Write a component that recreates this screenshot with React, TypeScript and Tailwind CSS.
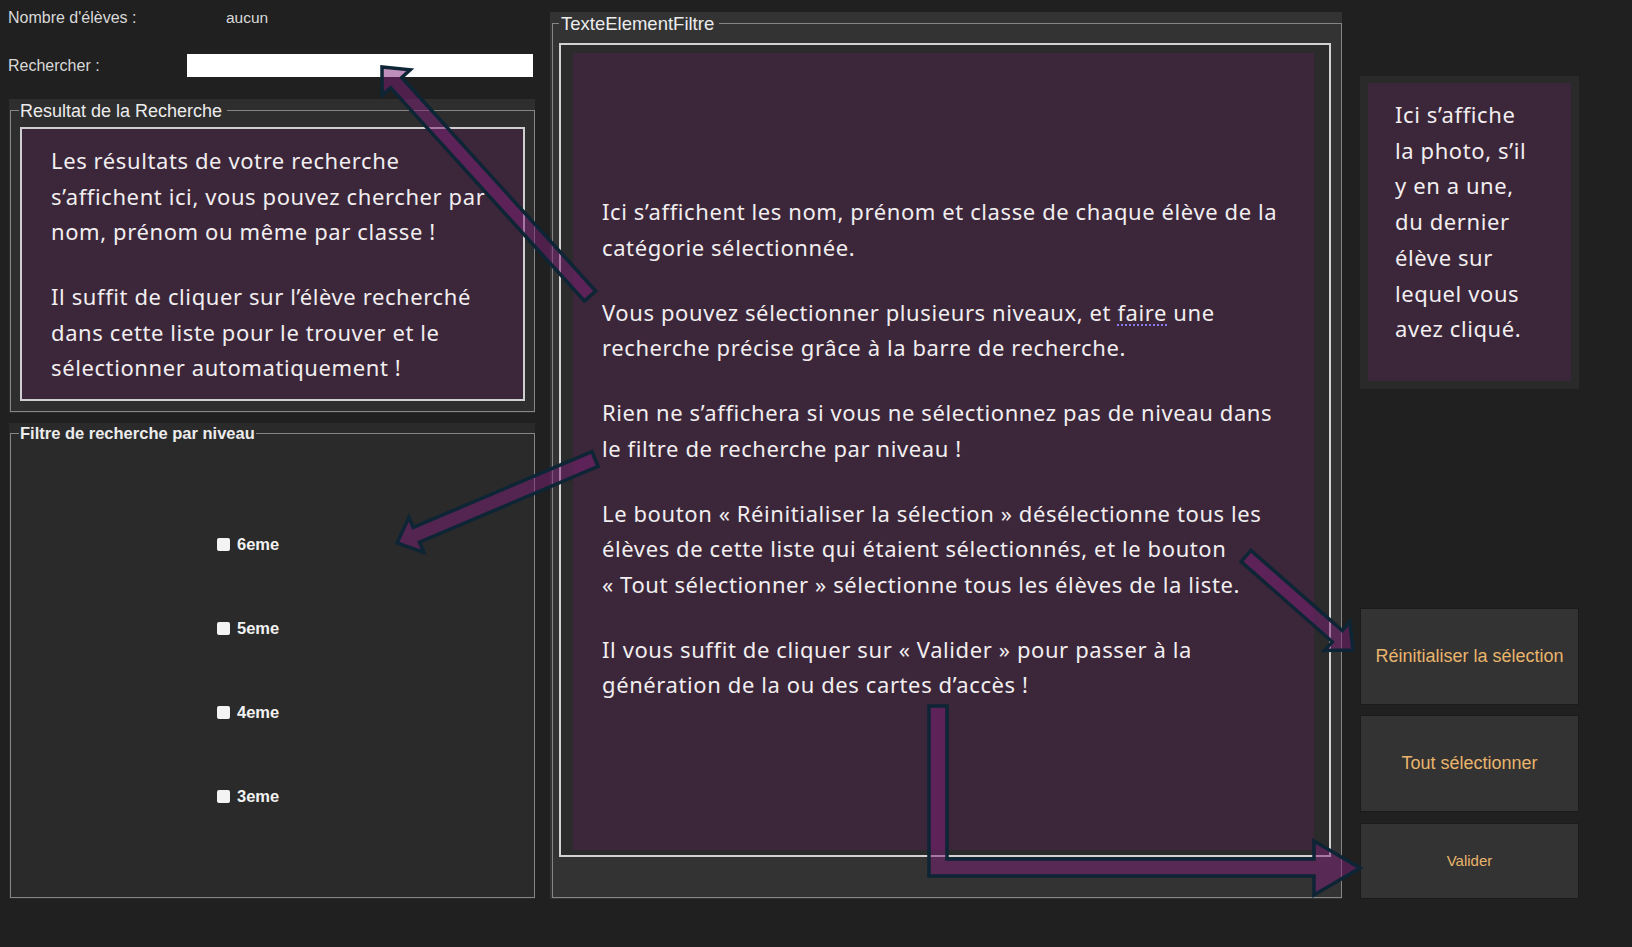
import React from 'react';

const ui = "font-['Liberation_Sans',Arial,sans-serif]";
const prose = "font-['Noto_Sans',sans-serif] text-[22px] tracking-[0.6px] leading-[35.5px] text-[#f1eef0]";

function arrow(tx: number, ty: number, cx: number, cy: number, w: number, hw: number, hl: number) {
  const len = Math.hypot(tx - cx, ty - cy);
  const ux = (tx - cx) / len;
  const uy = (ty - cy) / len;
  const nx = -uy;
  const ny = ux;
  const bx = tx - ux * hl;
  const by = ty - uy * hl;
  const pts = [
    [cx + nx * w, cy + ny * w],
    [bx + nx * w, by + ny * w],
    [bx + nx * hw, by + ny * hw],
    [tx, ty],
    [bx - nx * hw, by - ny * hw],
    [bx - nx * w, by - ny * w],
    [cx - nx * w, cy - ny * w],
  ];
  return pts.map((p) => p[0].toFixed(1) + ',' + p[1].toFixed(1)).join(' ');
}

function Lines({ lines }: { lines: string[] }) {
  return (
    <>
      {lines.map((l) => (
        <span key={l} className="block whitespace-nowrap">{l}</span>
      ))}
    </>
  );
}

function Level({ label }: { label: string }) {
  return (
    <div className="flex items-center h-[24px]">
      <span className="w-[13px] h-[13px] rounded-[2px] bg-[#f3f3f3]" />
      <span className={`${ui} ml-[7px] text-[16.5px] font-bold text-[#f2f2f2]`}>{label}</span>
    </div>
  );
}

function Button({ label, h, small }: { label: string; h: string; small?: boolean }) {
  return (
    <button
      className={`${h} w-[219px] bg-[#333333] border border-[#1b1b1b] flex items-center justify-center ${ui} ${
        small ? 'text-[15px]' : 'text-[18px]'
      } text-[#e9b46c]`}
    >
      {label}
    </button>
  );
}

export default function App() {
  return (
    <div className="relative w-[1632px] h-[947px] bg-[#202020] overflow-hidden flex">
      {/* colonne gauche */}
      <div className="ml-[8px] w-[527px] flex flex-col">
        <div className={`h-[36px] flex items-center ${ui} text-[16px] text-[#d9d9d9]`}>
          <span className="w-[218px]">Nombre d'élèves :</span>
          <span className="text-[15.5px]">aucun</span>
        </div>
        <div className="mt-[18px] h-[23px] flex items-center">
          <span className={`w-[179px] ${ui} text-[16px] text-[#d9d9d9]`}>Rechercher :</span>
          <input className="h-[23px] w-[346px] bg-white outline-none" />
        </div>

        <div className="relative mt-[22px] ml-[1px] h-[314px] bg-[#2e2e2e] pt-[11px] pl-[1px] pb-[1px] flex flex-col">
          <span className={`absolute left-[10px] top-[2px] pl-[1px] pr-[5px] bg-[#2e2e2e] ${ui} text-[18px] leading-[20px] text-[#ececec]`}>
            Resultat de la Recherche
          </span>
          <div className="flex-1 border border-[#858585] pt-[16px] pl-[9px] pr-[9px] pb-[10px] flex">
            <div className={`flex-1 border-2 border-[#cfcfcf] bg-[#3c2639] pl-[29px] pt-[14px] ${prose}`}>
              <Lines lines={['Les résultats de votre recherche', 's’affichent ici, vous pouvez chercher par', 'nom, prénom ou même par classe !']} />
              <div className="mt-[29.5px]">
                <Lines lines={['Il suffit de cliquer sur l’élève recherché', 'dans cette liste pour le trouver et le', 'sélectionner automatiquement !']} />
              </div>
            </div>
          </div>
        </div>

        <div className="relative mt-[10px] ml-[1px] h-[476px] bg-[#2a2a2a] pt-[10px] pl-[1px] pb-[1px] flex flex-col">
          <span className={`absolute left-[10px] top-[0px] px-[1px] bg-[#2a2a2a] ${ui} text-[16.5px] font-bold leading-[20px] text-[#ececec]`}>
            Filtre de recherche par niveau
          </span>
          <div className="flex-1 border border-[#858585] pt-[98px] pl-[206px] flex flex-col gap-[60px]">
            <Level label="6eme" />
            <Level label="5eme" />
            <Level label="4eme" />
            <Level label="3eme" />
          </div>
        </div>
      </div>

      {/* panneau central */}
      <div className="relative ml-[15px] mt-[12px] w-[792px] h-[887px] bg-[#333333] pt-[11px] pl-[2px] pb-[1px] flex flex-col">
        <span className={`absolute left-[9px] top-[1px] pl-[2px] pr-[5px] bg-[#333333] ${ui} text-[18.5px] leading-[22px] text-[#ececec]`}>
          TexteElementFiltre
        </span>
        <div className="flex-1 border border-[#858585] pt-[19px] pl-[6px] pr-[10px] pb-[40px] flex">
          <div className="flex-1 border-2 border-[#d2d2d2] bg-[#2b2b2b] pt-[8px] pl-[12px] pr-[15px] pb-[5px] flex">
            <div className={`flex-1 bg-[#3c2639] pl-[29px] pt-[141px] ${prose}`}>
              <Lines lines={['Ici s’affichent les nom, prénom et classe de chaque élève de la', 'catégorie sélectionnée.']} />
              <div className="mt-[29.5px]">
                <span className="block whitespace-nowrap">
                  Vous pouvez sélectionner plusieurs niveaux, et{' '}
                  <span className="underline decoration-dotted decoration-[#8a7cf0] decoration-2 underline-offset-[4px]">faire</span> une
                </span>
                <span className="block whitespace-nowrap">recherche précise grâce à la barre de recherche.</span>
              </div>
              <div className="mt-[29.5px]">
                <Lines lines={['Rien ne s’affichera si vous ne sélectionnez pas de niveau dans', 'le filtre de recherche par niveau !']} />
              </div>
              <div className="mt-[29.5px]">
                <Lines
                  lines={[
                    'Le bouton « Réinitialiser la sélection » désélectionne tous les',
                    'élèves de cette liste qui étaient sélectionnés, et le bouton',
                    '« Tout sélectionner » sélectionne tous les élèves de la liste.',
                  ]}
                />
              </div>
              <div className="mt-[29.5px]">
                <Lines lines={['Il vous suffit de cliquer sur « Valider » pour passer à la', 'génération de la ou des cartes d’accès !']} />
              </div>
            </div>
          </div>
        </div>
      </div>

      {/* colonne droite */}
      <div className="ml-[18px] flex flex-col">
        <div className="mt-[76px] h-[313px] w-[219px] bg-[#2a2a2a] pt-[7px] px-[8px] pb-[8px] flex">
          <div className={`flex-1 bg-[#3c2639] pl-[27px] pt-[14px] ${prose} leading-[35.7px]`}>
            <Lines lines={['Ici s’affiche', 'la photo, s’il', 'y en a une,', 'du dernier', 'élève sur', 'lequel vous', 'avez cliqué.']} />
          </div>
        </div>
        <div className="mt-[219px]">
          <Button label="Réinitialiser la sélection" h="h-[97px]" />
        </div>
        <div className="mt-[10px]">
          <Button label="Tout sélectionner" h="h-[97px]" />
        </div>
        <div className="mt-[11px]">
          <Button label="Valider" h="h-[76px]" small />
        </div>
      </div>

      {/* flèches d'annotation */}
      <svg className="absolute inset-0 pointer-events-none" width="1632" height="947" viewBox="0 0 1632 947">
        <g fill="#7e2078" fillOpacity="0.5" stroke="#0d2535" strokeWidth="3.5" strokeLinejoin="miter">
          <polygon points={arrow(382, 67, 590, 296, 7.5, 19, 21)} />
          <polygon points={arrow(397, 543, 595, 459, 8, 19, 21)} />
          <polygon points={arrow(1353, 650, 1246, 556, 7.5, 19, 21)} />
          <polygon points="929,706 947,706 947,859 1314,859 1314,841 1360,868 1314,895 1314,876 929,876" />
        </g>
      </svg>
    </div>
  );
}
